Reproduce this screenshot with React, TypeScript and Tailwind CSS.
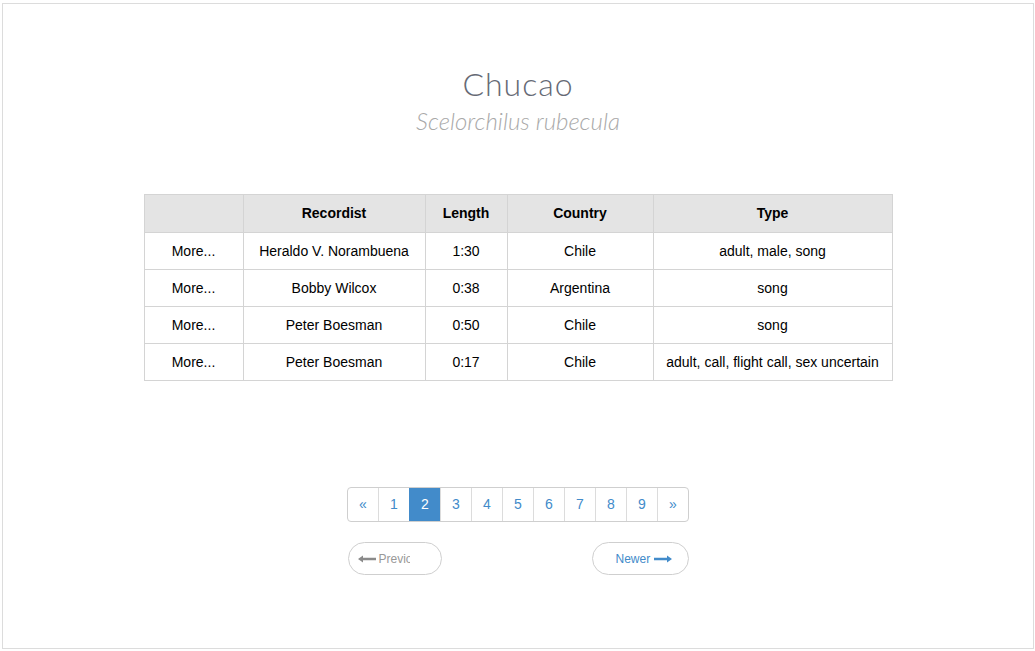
import React from 'react'

type Row = { recordist: string; length: string; country: string; type: string }

const ROWS: Row[] = [
  { recordist: 'Heraldo V. Norambuena', length: '1:30', country: 'Chile', type: 'adult, male, song' },
  { recordist: 'Bobby Wilcox', length: '0:38', country: 'Argentina', type: 'song' },
  { recordist: 'Peter Boesman', length: '0:50', country: 'Chile', type: 'song' },
  { recordist: 'Peter Boesman', length: '0:17', country: 'Chile', type: 'adult, call, flight call, sex uncertain' },
]

const PAGES = ['«', '1', '2', '3', '4', '5', '6', '7', '8', '9', '»']

function Arrow({ dir, color }: { dir: 'left' | 'right'; color: string }) {
  return (
    <svg width="18" height="8" viewBox="0 0 18 8" className="shrink-0">
      {dir === 'left' ? (
        <path d="M0 4 L5 0.5 L5 2.8 L18 2.8 L18 5.2 L5 5.2 L5 7.5 Z" fill={color} />
      ) : (
        <path d="M18 4 L13 0.5 L13 2.8 L0 2.8 L0 5.2 L13 5.2 L13 7.5 Z" fill={color} />
      )}
    </svg>
  )
}

export default function App() {
  return (
    <div className="h-[651px] bg-white pt-[3px] pl-[2px] pr-[1px] pb-[2px] font-['Liberation_Sans',Arial,sans-serif]">
      <div className="h-full border border-[#dcdcdc] flex flex-col items-center">
        {/* Header */}
        <h1 className="mt-[61px] text-[32px] leading-[38px] font-light tracking-[1px] text-[#666a75] font-['Lato',sans-serif]">
          Chucao
        </h1>
        <h2 className="mt-[3px] text-[24px] leading-[30px] font-light italic text-[#a9a9a9] font-['Lato',sans-serif]">
          Scelorchilus rubecula
        </h2>

        {/* Recordings */}
        <table className="mt-[58px] w-[749px] border-collapse text-[14px] text-black">
          <thead>
            <tr className="bg-[#e4e4e4] h-[38px]">
              <th className="w-[99px] border border-[#d4d4d4]"></th>
              <th className="w-[182px] border border-[#d4d4d4] font-bold">Recordist</th>
              <th className="w-[82px] border border-[#d4d4d4] font-bold">Length</th>
              <th className="w-[146px] border border-[#d4d4d4] font-bold">Country</th>
              <th className="border border-[#d4d4d4] font-bold">Type</th>
            </tr>
          </thead>
          <tbody>
            {ROWS.map((r, i) => (
              <tr key={i} className="h-[37px] text-center">
                <td className="border border-[#d4d4d4]">More...</td>
                <td className="border border-[#d4d4d4]">{r.recordist}</td>
                <td className="border border-[#d4d4d4]">{r.length}</td>
                <td className="border border-[#d4d4d4]">{r.country}</td>
                <td className="border border-[#d4d4d4]">{r.type}</td>
              </tr>
            ))}
          </tbody>
        </table>

        {/* Pagination */}
        <div className="mt-[106px] flex h-[35px] rounded-[4px] border border-[#cfcfcf] overflow-hidden text-[14px]">
          {PAGES.map((p, i) => (
            <div
              key={i}
              className={
                p === '2'
                  ? 'w-[31px] flex items-center justify-center bg-[#428bca] text-white border-l border-[#428bca]'
                  : i === 0
                    ? 'w-[30px] flex items-center justify-center text-[#428bca]'
                    : 'w-[31px] flex items-center justify-center text-[#428bca] border-l border-[#dcdcdc]'
              }
            >
              {p}
            </div>
          ))}
        </div>

        {/* Pager */}
        <div className="mt-[20px] w-[341px] flex justify-between text-[12px]">
          <div className="w-[94px] h-[33px] rounded-full border border-[#cfcfcf] flex items-center pl-[9px]">
            <div className="w-[52px] overflow-hidden flex items-center gap-[3px] whitespace-nowrap text-[#999]">
              <Arrow dir="left" color="#8a8a8a" />
              <span>Previous</span>
            </div>
          </div>
          <div className="w-[97px] h-[33px] rounded-full border border-[#cfcfcf] flex items-center pl-[23px] gap-[4px] text-[#428bca]">
            <span>Newer</span>
            <Arrow dir="right" color="#428bca" />
          </div>
        </div>
      </div>
    </div>
  )
}
